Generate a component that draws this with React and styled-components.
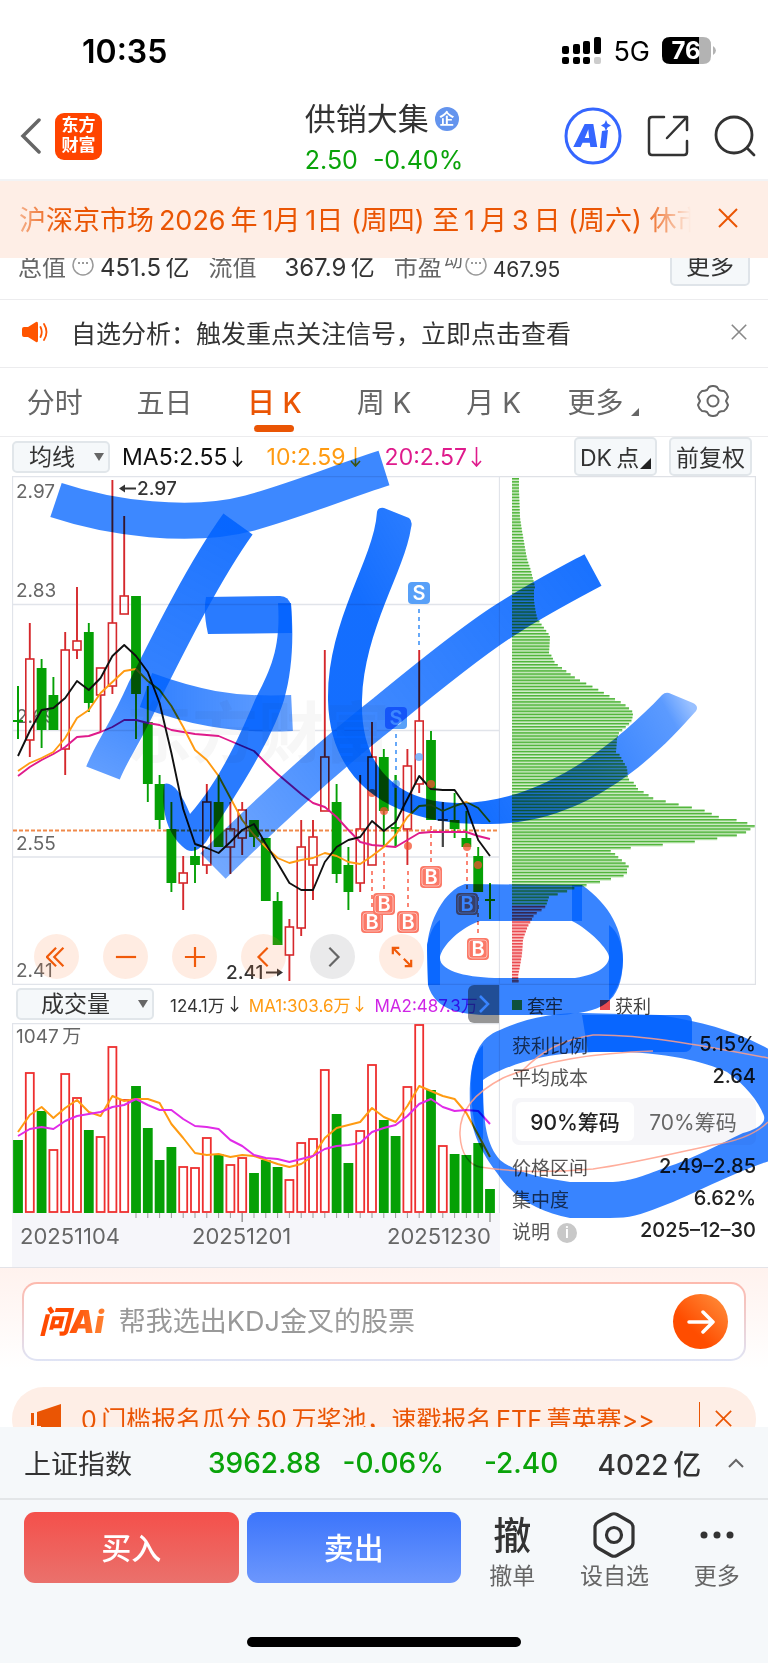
import React, { useState } from "react";
import styled, { createGlobalStyle } from "styled-components";

const GlobalStyle = createGlobalStyle`
  *, *::before, *::after { box-sizing: border-box; }
  body {
    margin: 0;
    background: #ffffff;
    color: #333333;
    font-family: Inter, "Noto Sans CJK SC", sans-serif;
  }
  button, input, select { font-family: inherit; color: inherit; }
  button { border: 0; padding: 0; background: none; cursor: pointer; }
  svg { display: block; }
`;

const Page = styled.main`
  display: flex;
  flex-direction: column;
  width: 100%;
  overflow: hidden;
`;

/* ---------- status bar and header ---------- */

const StatusBar = styled.div`
  display: flex;
  align-items: center;
  justify-content: space-between;
  height: 94px;
  padding: 8px 52px 0 82px;
  color: #000000;
`;

const Clock = styled.time`
  font-size: 32px;
  font-weight: 600;
`;

const StatusIcons = styled.div`
  display: flex;
  align-items: center;
  gap: 12px;
  font-size: 27px;
`;

const Header = styled.header`
  display: grid;
  grid-template-columns: 1fr auto 1fr;
  align-items: center;
  height: 87px;
  padding: 1px 12px 2px;
  border-bottom: 2px solid #f2f3f5;
`;

const HeaderSide = styled.div`
  display: flex;
  align-items: center;
  justify-content: ${(p) => (p.$end ? "flex-end" : "flex-start")};
  gap: ${(p) => (p.$end ? 25 : 13)}px;
  height: 68px;
  padding-left: 8px;
`;

const Brand = styled.div`
  display: grid;
  place-items: center;
  align-content: center;
  width: 47px;
  height: 47px;
  padding-bottom: 2px;
  border-radius: 9px;
  background: #ff4400;
  color: #ffffff;
  font-size: 17px;
  font-weight: 700;
  line-height: 20px;
`;

const StockTitle = styled.div`
  display: flex;
  flex-direction: column;
  gap: 4px;
  padding-top: 4px;
`;

const StockName = styled.h1`
  display: flex;
  align-items: center;
  gap: 6px;
  margin: 0;
  font-size: 31px;
  font-weight: 400;
  line-height: 40px;
`;

const CorpBadge = styled.span`
  display: grid;
  place-items: center;
  width: 24px;
  height: 24px;
  border-radius: 50%;
  background: #6494ee;
  color: #ffffff;
  font-size: 15px;
  font-weight: 700;
  line-height: 24px;
`;

const StockPrice = styled.div`
  display: flex;
  gap: 15px;
  color: #0aa30a;
  font-size: 25px;
  line-height: 34px;
`;

/* ---------- notices ---------- */

const Notice = styled.section`
  display: flex;
  align-items: center;
  justify-content: space-between;
  height: 77px;
  padding: 0 30px 3px 19px;
  background: #feeee6;
  color: #ea5504;
`;

const NoticeText = styled.p`
  flex: 0 1 672px;
  margin: 0;
  overflow: hidden;
  white-space: nowrap;
  font-size: 27px;
  mask-image: linear-gradient(90deg, rgba(0, 0, 0, 0.4), #000 40px, #000 calc(100% - 50px), transparent);
`;

const StatStrip = styled.section`
  display: flex;
  align-items: flex-end;
  height: 42px;
  padding: 0 18px 13px 18px;
  overflow: hidden;
  border-bottom: 1px solid #ececee;
`;

const Stat = styled.div`
  display: flex;
  align-items: center;
  gap: 6px;
  height: 36px;
  margin-right: 19px;
  font-size: 24px;
  line-height: 36px;
  white-space: nowrap;
`;

const StatLabel = styled.span`
  display: flex;
  align-items: center;
  gap: ${(p) => (p.$wide ? 0 : 6)}px;
  width: ${(p) => (p.$wide ? "70px" : "auto")};
  color: #666666;
`;

const HintIcon = styled.svg`
  margin-bottom: 6px;
`;

const Sup = styled.small`
  margin: 0 -4px 14px -4px;
  font-size: 19px;
`;

const StatValue = styled.span`
  font-size: ${(p) => (p.$small ? 21 : 24)}px;
  padding-top: ${(p) => (p.$small ? 4 : 0)}px;
`;

const MoreButton = styled.button`
  width: 80px;
  height: 40px;
  margin: 0 0 0 auto;
  border: 2px solid #dfe4e9;
  border-radius: 5px;
  background: #f5f8fa;
  font-size: 24px;
  line-height: 30px;
`;

const Signal = styled.section`
  display: flex;
  align-items: center;
  height: 68px;
  padding: 0 21px 3px 22px;
  border-bottom: 1px solid #ececee;
  font-size: 25px;
`;

const SignalText = styled.p`
  flex: 1;
  margin: 0 0 0 22px;
  white-space: nowrap;
`;

/* ---------- chart ---------- */

const Tabs = styled.div`
  display: grid;
  grid-template-columns: repeat(7, 1fr);
  height: 69px;
  border-bottom: 1px solid #ececee;
`;

const Tab = styled.button`
  position: relative;
  display: flex;
  align-items: center;
  justify-content: center;
  gap: 8px;
  padding-bottom: 3px;
  font-size: 28px;
  color: ${(p) => (p.$active ? "#ea5504" : "#666666")};
  font-weight: ${(p) => (p.$active ? 500 : 400)};

  &::after {
    content: "";
    display: ${(p) => (p.$active ? "block" : "none")};
    position: absolute;
    left: calc(50% - 20px);
    bottom: 4px;
    width: 40px;
    height: 7px;
    border-radius: 4px;
    background: #ea5504;
  }
`;

const Corner = styled.i`
  align-self: flex-end;
  width: 0;
  height: 0;
  margin-bottom: ${(p) => (p.$dark ? 3 : 17)}px;
  border-left: ${(p) => (p.$dark ? 11 : 8)}px solid transparent;
  border-bottom: ${(p) => (p.$dark ? 11 : 8)}px solid ${(p) => (p.$dark ? "#222222" : "#666666")};
`;

const ChartSection = styled.section`
  position: relative;
  padding: 0 12px;
  border-bottom: 1px solid #e3e3e8;
`;

const ChartBar = styled.div`
  display: flex;
  align-items: center;
  height: 39px;
`;

const Averages = styled.div`
  display: flex;
  flex: 1;
  gap: ${(p) => p.$gap}px;
  margin-left: ${(p) => p.$indent}px;
  font-size: ${(p) => p.$size}px;
  white-space: nowrap;
`;

const Average = styled.span`
  display: flex;
  align-items: center;
  gap: 4px;
  color: ${(p) => p.$color};
`;

const ChartOption = styled.button`
  display: flex;
  align-items: center;
  justify-content: center;
  gap: 1px;
  width: 83px;
  height: 39px;
  margin-left: 12px;
  padding-bottom: 2px;
  border: 2px solid #e1e6ea;
  border-radius: 5px;
  background: #f5f8fa;
  font-size: 23px;
  white-space: nowrap;
  &:last-child { margin-right: 4px; }
`;

const SelectBox = styled.label`
  position: relative;
  display: flex;
  align-items: center;
  width: ${(p) => p.$width}px;
  height: 32px;
  margin-left: ${(p) => p.$indent}px;
  border: 2px solid #e1e6ea;
  border-radius: 5px;
  background: #f5f8fa;

  &::after {
    content: "";
    position: absolute;
    right: 4px;
    border: 5px solid transparent;
    border-top: 8px solid #666666;
    border-bottom: 0;
    pointer-events: none;
  }
`;

const Select = styled.select`
  width: 100%;
  height: 100%;
  padding: 0 20px 0 ${(p) => p.$pad}px;
  border: 0;
  appearance: none;
  background: transparent;
  font-size: 23px;
  line-height: 28px;
  outline: none;
`;

const ChartGrid = styled.div`
  display: grid;
  grid-template-columns: 488fr 256fr;
`;

const Column = styled.div`
  min-width: 0;
`;

const Plot = styled.div`
  position: relative;
  & > svg { width: 100%; height: auto; }
`;

const PlotButtons = styled.div`
  position: absolute;
  left: 22px;
  bottom: 6px;
  display: flex;
  gap: 24px;
`;

const RoundButton = styled.button`
  display: grid;
  place-items: center;
  width: 45px;
  height: 45px;
  border-radius: 50%;
  background: ${(p) => (p.$muted ? "rgba(90,90,100,0.13)" : "rgba(255,120,50,0.14)")};
`;

const Expander = styled.button`
  position: absolute;
  right: 0;
  top: 0;
  display: grid;
  place-items: center;
  width: 31px;
  height: 38px;
  border-radius: 6px 0 0 6px;
  background: rgba(80, 80, 80, 0.6);
`;

const VolumeBar = styled(ChartBar)`
  position: relative;
  height: 38px;
  border-right: 1px solid #e3e5ea;
`;

const Legend = styled.div`
  display: flex;
  align-items: center;
  gap: 37px;
  height: 43px;
  padding: 0 0 4px 12px;
  font-size: 18px;
  color: #444444;
`;

const LegendItem = styled.span`
  display: flex;
  align-items: center;
  gap: 5px;
  &::before {
    content: "";
    width: 10px;
    height: 10px;
    background: ${(p) => p.$color};
  }
`;

const ChipTable = styled.table`
  width: calc(100% - 12px);
  margin-left: 12px;
  border-collapse: collapse;
  font-size: 19px;
`;

const ChipLabel = styled.th`
  height: 32px;
  padding: 0;
  color: #555555;
  font-weight: 400;
  text-align: left;
  white-space: nowrap;
`;

const ChipValue = styled.td`
  padding: 0;
  color: #222222;
  font-size: 20px;
  font-weight: 500;
  text-align: right;
`;

const InfoDot = styled.span`
  display: inline-grid;
  place-items: center;
  width: 20px;
  height: 20px;
  margin-left: 7px;
  border-radius: 50%;
  background: #c8c8c8;
  color: #ffffff;
  font-size: 15px;
  font-weight: 600;
  line-height: 20px;
  vertical-align: middle;
`;

const Segments = styled.div`
  display: grid;
  grid-template-columns: 1fr 1fr;
  height: 47px;
  margin: 6px 0 5px 12px;
  padding: 4px;
  border-radius: 7px;
  background: #f6f6f9;
`;

const Segment = styled.button`
  padding-bottom: 2px;
  border-radius: 6px;
  background: ${(p) => (p.$on ? "#ffffff" : "transparent")};
  color: ${(p) => (p.$on ? "#222222" : "#666666")};
  font-size: 21px;
  font-weight: ${(p) => (p.$on ? 500 : 400)};
  white-space: nowrap;
`;

const Ink = styled.svg`
  position: absolute;
  left: 0;
  top: 0;
  width: 100%;
  height: auto;
  pointer-events: none;
  mix-blend-mode: multiply;
`;

/* ---------- assistant, promo, index, trade ---------- */

const Assistant = styled.section`
  padding: 14px 22px 26px;
  background: linear-gradient(#fff2ee, #ffffff 85%);
`;

const AskBox = styled.form`
  display: flex;
  align-items: center;
  height: 79px;
  padding: 0 16px 0 15px;
  border: 2px solid transparent;
  border-radius: 15px;
  background: linear-gradient(#ffffff, #ffffff) padding-box,
    linear-gradient(#fdb9ad, #dfe4f5) border-box;
`;

const AskLogo = styled.span`
  padding-right: 5px;
  background: linear-gradient(100deg, #ff4a00 40%, #ff8d3c);
  background-clip: text;
  -webkit-background-clip: text;
  color: transparent;
  font-size: 31px;
  font-style: italic;
  font-weight: 900;
  line-height: 40px;
  white-space: nowrap;
`;

const AskInput = styled.input`
  flex: 1;
  min-width: 0;
  height: 60px;
  margin-left: 10px;
  padding: 0;
  border: 0;
  outline: none;
  background: transparent;
  font-size: 27px;
  &::placeholder { color: #999999; opacity: 1; }
`;

const AskButton = styled.button`
  display: grid;
  place-items: center;
  width: 55px;
  height: 55px;
  border-radius: 50%;
  background: linear-gradient(45deg, #ff4d00 35%, #ff9340);
`;

const PromoClip = styled.section`
  height: 40px;
  padding: 0 12px;
  overflow: hidden;
`;

const Promo = styled.div`
  display: flex;
  align-items: center;
  height: 64px;
  padding: 0 24px 2px 19px;
  border-radius: 32px;
  background: #feeee6;
  color: #ea5504;
  font-size: 25px;
`;

const PromoText = styled.p`
  flex: 1;
  margin: 0 0 0 19px;
  white-space: nowrap;
`;

const PromoClose = styled.button`
  display: flex;
  align-items: center;
  height: 32px;
  padding-left: 15px;
  border-left: 1px solid #ea5504;
`;

const IndexBar = styled.section`
  display: flex;
  align-items: center;
  height: 73px;
  padding: 0 24px 0 24px;
  background: #f5f8fa;
  border-bottom: 2px solid #e3e6e8;
  font-size: 28px;
  font-weight: 500;
  white-space: nowrap;
`;

const IndexName = styled.span`
  width: 184px;
  font-size: 27px;
  font-weight: 400;
`;

const IndexValue = styled.span`
  flex: ${(p) => p.$grow} 1 0;
  color: ${(p) => (p.$down ? "#0aa30a" : "#333333")};
`;

const TradeBar = styled.footer`
  display: grid;
  grid-template-columns: 437fr 307fr;
  padding: 12px 0 0 24px;
  background: #f5f8fa;
`;

const TradeButtons = styled.div`
  display: grid;
  grid-template-columns: 1fr 1fr;
  gap: 8px;
`;

const TradeButton = styled.button`
  height: 71px;
  padding-bottom: 4px;
  border-radius: 11px;
  background: ${(p) =>
    p.$buy ? "linear-gradient(#f4504b, #ea716c)" : "linear-gradient(#3c75fb, #6c97fd)"};
  color: #ffffff;
  font-size: 30px;
  font-weight: 500;
`;

const Tools = styled.nav`
  display: grid;
  grid-template-columns: repeat(3, 1fr);
`;

const Tool = styled.button`
  display: flex;
  flex-direction: column;
  align-items: center;
  color: #666666;
  font-size: 23px;
  line-height: 36px;
  white-space: nowrap;
`;

const ToolIcon = styled.span`
  display: grid;
  place-items: center;
  height: 46px;
  color: #333333;
  font-size: 38px;
  font-weight: 500;
  line-height: 46px;
`;

const HomeArea = styled.div`
  display: flex;
  justify-content: center;
  padding: 43px 0 17px;
  background: #f5f8fa;
  &::after {
    content: "";
    width: 274px;
    height: 10px;
    border-radius: 5px;
    background: #000000;
  }
`;

/* ---------- data ---------- */

const GREEN = "#05a005";
const RED = "#d5282c";
const FIRST_X = 18;
const STEP = 11.8;
const xAt = (i) => FIRST_X + STEP * i;

// [direction, high, body top, body bottom, low] on the plot's vertical scale
const CANDLES = [
  ["g", 686, 721, 722, 739], ["r", 623, 659, 740, 757], ["g", 659, 668, 730, 748],
  ["g", 677, 695, 730, 730], ["r", 632, 650, 749, 775], ["r", 587, 641, 650, 659],
  ["g", 623, 632, 703, 712], ["r", 668, 668, 695, 732], ["r", 480, 623, 686, 694],
  ["r", 516, 596, 614, 614], ["g", 596, 596, 694, 739], ["g", 686, 722, 784, 802],
  ["g", 775, 784, 820, 829], ["g", 802, 829, 883, 892], ["r", 856, 873, 883, 910],
  ["g", 847, 856, 865, 883], ["r", 784, 802, 865, 874], ["g", 775, 802, 847, 847],
  ["r", 802, 829, 847, 874], ["r", 802, 810, 838, 855], ["g", 820, 820, 837, 847],
  ["g", 838, 838, 901, 901], ["g", 892, 901, 945, 945], ["r", 919, 927, 955, 981],
  ["r", 820, 847, 928, 936], ["r", 820, 837, 865, 900], ["r", 650, 757, 811, 811],
  ["g", 784, 802, 874, 883], ["g", 847, 865, 892, 910], ["r", 775, 829, 883, 892],
  ["r", 722, 757, 865, 865], ["g", 749, 757, 811, 846], ["g", 775, 828, 829, 847],
  ["r", 749, 766, 829, 865], ["r", 650, 721, 784, 793], ["g", 731, 740, 820, 820],
  ["k", 802, 820, 821, 847], ["g", 793, 820, 829, 838], ["g", 811, 838, 847, 847],
  ["g", 847, 856, 892, 892], ["g", 883, 900, 901, 919],
];

const MA5 = [756, 731, 710, 708, 698, 681, 690, 678, 656, 645, 656, 672, 703, 753, 809, 844, 848, 853, 842, 830, 824, 844, 863, 883, 890, 890, 862, 847, 840, 837, 821, 831, 822, 799, 776, 789, 790, 790, 807, 840, 856];
const MA10 = [771, 763, 758, 752, 738, 718, 710, 693, 682, 671, 669, 681, 690, 706, 727, 750, 760, 776, 798, 820, 835, 847, 858, 863, 860, 858, 853, 856, 862, 864, 856, 847, 835, 817, 806, 805, 811, 806, 802, 808, 822];
const MA20 = [776, 767, 760, 754, 747, 737, 736, 732, 727, 720, 720, 723, 725, 730, 732, 734, 735, 736, 741, 746, 751, 763, 774, 784, 794, 803, 807, 817, 830, 842, 845, 846, 847, 840, 833, 832, 832, 832, 832, 836, 839];

const VOLUMES = [
  ["g", 1140], ["r", 1072], ["g", 1111], ["r", 1149], ["r", 1073], ["r", 1097], ["g", 1130], ["r", 1136],
  ["r", 1046], ["r", 1099], ["g", 1086], ["g", 1128], ["g", 1160], ["g", 1147], ["r", 1166], ["r", 1167],
  ["r", 1137], ["g", 1154], ["r", 1164], ["r", 1157], ["g", 1173], ["g", 1160], ["g", 1167], ["r", 1179],
  ["r", 1142], ["r", 1138], ["r", 1069], ["g", 1114], ["g", 1163], ["r", 1130], ["r", 1064], ["g", 1120],
  ["g", 1136], ["r", 1086], ["r", 1024], ["g", 1090], ["r", 1145], ["g", 1154], ["g", 1155], ["g", 1143],
  ["g", 1189],
];
const VMA1 = [1132, 1115, 1107, 1118, 1108, 1100, 1112, 1116, 1096, 1101, 1099, 1099, 1103, 1124, 1138, 1153, 1155, 1154, 1157, 1155, 1156, 1160, 1164, 1167, 1164, 1156, 1138, 1128, 1125, 1122, 1108, 1117, 1122, 1106, 1086, 1091, 1096, 1099, 1113, 1135, 1157];
const VMA2 = [1136, 1129, 1127, 1129, 1121, 1116, 1114, 1112, 1107, 1105, 1099, 1105, 1110, 1110, 1119, 1126, 1127, 1129, 1140, 1146, 1155, 1158, 1159, 1162, 1159, 1156, 1149, 1146, 1145, 1143, 1132, 1128, 1125, 1116, 1104, 1099, 1107, 1111, 1110, 1111, 1124];

// [vertical position, bar length] outline of the chip distribution
const CHIPS = [
  [477, 7], [490, 7], [517, 8], [530, 10], [547, 13], [558, 15], [570, 19], [586, 23], [589, 22], [600, 22],
  [607, 23], [617, 25], [623, 29], [635, 38], [652, 37], [654, 39], [662, 43], [670, 54], [678, 65], [687, 83],
  [697, 101], [703, 112], [710, 120], [713, 121], [719, 120], [723, 117], [732, 107], [738, 105], [751, 104],
  [753, 107], [760, 111], [767, 115], [778, 116], [782, 122], [788, 126], [793, 135], [797, 140], [800, 152],
  [806, 177], [809, 191], [816, 207], [818, 221], [822, 235], [825, 243], [827, 240], [831, 235], [834, 228],
  [837, 209], [840, 190], [843, 159], [846, 128], [849, 97], [852, 102], [856, 106], [862, 113], [865, 117],
  [868, 115], [874, 115], [877, 102], [880, 92], [883, 80], [886, 65], [890, 56], [893, 47], [896, 37],
  [902, 35], [905, 34], [908, 31], [911, 26], [914, 22], [920, 19], [925, 16], [938, 11], [953, 10], [965, 8],
  [975, 6], [984, 7],
];

const SELL_MARKS = [[419, 593, 609, 645, 757], [396, 718, 734, 770, 784]];
const BUY_MARKS = [
  [372, 922, 871, 907, 793], [384, 904, 853, 889, 811], [408, 922, 871, 907, 846],
  [431, 877, 826, 862, 784], [467, 904, 853, 889, 847], [478, 949, 897, 933, 865],
];

const toPoints = (ys) => ys.map((y, i) => `${xAt(i)},${y}`).join(" ");

function chipLength(y) {
  const next = CHIPS.findIndex((c) => c[0] >= y);
  if (next <= 0) return CHIPS[0][1];
  const [y0, w0] = CHIPS[next - 1];
  const [y1, w1] = CHIPS[next];
  return w0 + ((w1 - w0) * (y - y0)) / (y1 - y0);
}

/* ---------- drawings ---------- */

const Cross = ({ size, color, width = 2 }) => (
  <svg width={size} height={size} viewBox="0 0 20 20" stroke={color} strokeWidth={width} fill="none">
    <path d="M1 1 19 19M19 1 1 19" />
  </svg>
);

const DownArrow = ({ h = 20 }) => (
  <svg width="11" height={h} viewBox="0 0 11 20" fill="none" stroke="currentColor" strokeWidth="1.600">
    <path d="M5.500 0V19M1 14l4.500 5 4.500-5" />
  </svg>
);

const Hint = () => (
  <HintIcon width="22" height="22" viewBox="0 0 22 22" fill="none" stroke="#999" strokeWidth="1.500">
    <circle cx="11" cy="11" r="10" />
    <path d="M6 9h2M10 9h2M14 9h2" strokeWidth="2" />
  </HintIcon>
);

function Candles() {
  return CANDLES.map(([dir, high, top, bottom, low], i) => {
    const x = xAt(i);
    const color = dir === "g" ? GREEN : dir === "r" ? RED : "#444444";
    const flat = bottom - top < 2;
    return (
      <g key={i} stroke={color} strokeWidth="1.900" fill="none">
        <path d={`M${x} ${high}V${top}M${x} ${bottom}V${low}`} />
        {flat && <path d={`M${x - 5} ${top}h10M${x} ${high}V${low}`} />}
        {!flat && dir === "r" && <rect x={x - 4} y={top} width="8" height={bottom - top} strokeWidth="1.600" />}
        {!flat && dir === "g" && <rect x={x - 4.900} y={top} width="9.800" height={bottom - top} fill={color} stroke="none" />}
      </g>
    );
  });
}

function Mark({ x, y, from, to, dot, letter, color }) {
  return (
    <g>
      <path d={`M${x} ${from}V${to}`} stroke={color} strokeWidth="1.800" strokeDasharray="4 4" />
      <circle cx={x} cy={dot} r="4" fill={letter === "B" ? "#f4502f" : color} opacity="0.750" />
      <rect x={x - 11} y={y - 11} width="22" height="22" rx="4" fill={color} />
      {letter === "B" && (
        <rect x={x - 9} y={y - 9} width="18" height="18" rx="3" fill="none" stroke="#ffffff" strokeWidth="1" opacity="0.500" />
      )}
      <text x={x} y={y + 7} textAnchor="middle" fontSize="20" fontWeight="600" fill="#ffffff">{letter}</text>
    </g>
  );
}

function KLine() {
  return (
    <svg viewBox="12 476 488 509" role="img" aria-label="日K线图">
      <path d="M12.500 985V476.500H499.500V985M12 984.500H500M12 604.500H500M12 730.500H500M12 857H500" fill="none" stroke="#e1e4ea" strokeWidth="1.300" />
      <text x="126" y="757" fontSize="66" fontWeight="700" fill="#f7f7f7">东方财富</text>
      <g fontSize="19" fill="#666666">
        <text x="16" y="498">2.97</text>
        <text x="16" y="597">2.83</text>
        <text x="16" y="723">2.69</text>
        <text x="16" y="850">2.55</text>
        <text x="16" y="977">2.41</text>
      </g>
      <path d="M13 830.500H499" stroke="#f08a4b" strokeWidth="1.800" strokeDasharray="4 2" />
      <Candles />
      <g fill="none" strokeWidth="1.900" strokeLinejoin="round">
        <polyline points={toPoints(MA20)} stroke="#df1b8c" />
        <polyline points={toPoints(MA10)} stroke="#ff9b12" />
        <polyline points={toPoints(MA5)} stroke="#111111" />
      </g>
      {SELL_MARKS.map(([x, y, from, to, dot]) => (
        <Mark key={x} x={x} y={y} from={from} to={to} dot={dot} letter="S" color="#58a0f8" />
      ))}
      {BUY_MARKS.map(([x, y, from, to, dot]) => (
        <Mark key={x} x={x} y={y} from={from} to={to} dot={dot} letter="B" color="#fb7967" />
      ))}
      <g fontSize="19" fontWeight="500" fill="#333333">
        <text x="137" y="495">2.97</text>
        <text x="226" y="979">2.41</text>
      </g>
      <path d="M136 488.500H121M266 972.500H280" stroke="#333333" strokeWidth="2" />
      <path d="M119 488.500l6-4v8zM283 972.500l-6-4v8z" fill="#333333" />
    </svg>
  );
}

function Volume() {
  return (
    <svg viewBox="12 1023 488 244" role="img" aria-label="成交量图">
      <rect x="12" y="1213" width="488" height="54" fill="#f6f6fa" />
      <path d="M12.500 1213V1023.500H499.500V1213" fill="none" stroke="#e1e4ea" strokeWidth="1.300" />
      <text x="16" y="1043" fontSize="19" fill="#666666">1047{"\u2009"}万</text>
      {VOLUMES.map(([dir, top], i) =>
        dir === "g" ? (
          <rect key={i} x={xAt(i) - 4.900} y={top} width="9.800" height={1213 - top} fill={GREEN} />
        ) : (
          <rect key={i} x={xAt(i) - 4} y={top + 1} width="8" height={1211 - top} fill="none" stroke="#ee2f2f" strokeWidth="1.800" />
        )
      )}
      <g fill="none" strokeWidth="2" strokeLinejoin="round">
        <polyline points={toPoints(VMA1)} stroke="#ff9b12" />
        <polyline points={toPoints(VMA2)} stroke="#e02be8" />
      </g>
      {VOLUMES.map((v, i) =>
        i > 9 ? <path key={i} d={`M${xAt(i)} 1213v${i === 19 || i === 40 ? 9 : 5}`} stroke="#999999" strokeWidth={i === 19 || i === 40 ? 1.500 : 1} /> : null
      )}
      <g fontSize="22" fill="#666666">
        <text x="20" y="1244">20251104</text>
        <text x="192" y="1244">20251201</text>
        <text x="491" y="1244" textAnchor="end">20251230</text>
      </g>
    </svg>
  );
}

function ChipChart() {
  const bars = Array.from({ length: 163 }, (_, i) => 478 + i * 3.100);
  return (
    <svg viewBox="500 476 256 509" role="img" aria-label="筹码分布">
      <path d="M500 476.500H755.500V984.500H500" fill="none" stroke="#dfe1e6" strokeWidth="1.300" />
      {bars.map((y) => {
        const trapped = y < 904;
        const w = chipLength(y);
        return (
          <g key={y}>
            <rect x="512" y={y} width={w} height="2.600" fill={trapped ? "#b4e0a8" : "#f8a0a0"} />
            <rect x="512" y={y} width={w} height="1.400" fill={trapped ? "#52b53c" : "#ea4a50"} />
          </g>
        );
      })}
    </svg>
  );
}

function Handwriting() {
  return (
    <Ink viewBox="0 437 768 831" aria-hidden="true">
      <defs>
        <linearGradient id="fadeRight" gradientUnits="userSpaceOnUse" x1="480" y1="810" x2="685" y2="695">
          <stop offset="0" stopColor="#0062ff" stopOpacity="0.920" />
          <stop offset="0.500" stopColor="#0062ff" stopOpacity="0.800" />
          <stop offset="0.900" stopColor="#0062ff" stopOpacity="0.640" />
          <stop offset="1" stopColor="#0062ff" stopOpacity="0.400" />
        </linearGradient>
        <linearGradient id="fadeDown" gradientUnits="userSpaceOnUse" x1="235" y1="530" x2="105" y2="775">
          <stop offset="0" stopColor="#0062ff" stopOpacity="0.880" />
          <stop offset="0.600" stopColor="#0062ff" stopOpacity="0.800" />
          <stop offset="1" stopColor="#0062ff" stopOpacity="0.620" />
        </linearGradient>
        <linearGradient id="fadeUp" gradientUnits="userSpaceOnUse" x1="213" y1="866" x2="593" y2="570">
          <stop offset="0" stopColor="#0062ff" stopOpacity="0.550" />
          <stop offset="0.400" stopColor="#0062ff" stopOpacity="0.740" />
          <stop offset="1" stopColor="#0062ff" stopOpacity="0.900" />
        </linearGradient>
        <linearGradient id="fadeSide" gradientUnits="userSpaceOnUse" x1="140" y1="0" x2="294" y2="0">
          <stop offset="0" stopColor="#0062ff" stopOpacity="0.820" />
          <stop offset="1" stopColor="#0062ff" stopOpacity="0.600" />
        </linearGradient>
      </defs>
      <g fill="none" strokeWidth="36" strokeLinejoin="round">
        <path d="M56 500C110 518 190 529 250 513C300 499 340 482 384 468" stroke="#0062ff" opacity="0.760" />
        <path d="M238 524C205 570 170 640 145 690C125 735 112 750 103 773" stroke="url(#fadeDown)" />
        <path d="M146 690C190 706 230 716 292 713" stroke="url(#fadeSide)" />
        <path d="M213 866C280 800 330 755 385 712C430 675 480 635 510 617C540 598 565 585 593 570" stroke="url(#fadeUp)" />
      </g>
      <g fill="#0062ff">
        <path d="M206 597L280 596Q289 596 291 606L292 633L208 634Q203 612 206 597Z" opacity="0.840" />
        <path d="M278 603L291 603C294 640 292 672 284 700C270 745 232 800 206 842Q196 854 187 850C172 840 160 818 164 784Q176 780 190 814C220 780 240 735 255 700C270 670 281 650 278 603Z" opacity="0.840" />
        <path d="M377 512Q378 507 384 508L409 518Q413 521 411 528C405 570 364 630 362 700C360 770 400 803 460 803C540 803 615 745 662 695Q665 692 669 693L693 703Q699 706 696 711C660 752 590 824 490 824C400 826 330 790 328 700C327 620 374 560 377 512Z" fill="url(#fadeRight)" />
        <path fillRule="evenodd" opacity="0.780" d="M582 885L465 884C445 890 428 920 427 950L428 985C435 1010 460 1015 490 1015L560 1015C600 1012 622 1005 623 960C623 930 610 905 582 885ZM572 921L480 921C455 930 440 950 440 958C440 972 470 978 500 978L575 978C600 974 609 965 609 957C609 950 590 930 572 921Z" />
        <path d="M572 885h10v36h-10zM427 945Q432 925 440 920V985L428 985ZM609 925Q622 935 623 960Q622 985 609 1000Z" opacity="0.800" />
        <path fillRule="evenodd" opacity="0.780" d="M470 1107C468 1060 478 1038 500 1030C530 1016 560 1013 583 1013L660 1015C700 1022 740 1030 780 1056V1158C740 1168 700 1192 660 1207C640 1215 630 1218 610 1218H570C540 1212 515 1200 497 1173C482 1153 471 1133 470 1107ZM483 1080C500 1068 540 1054 577 1053C650 1048 700 1060 727 1072C745 1085 758 1100 764 1116C766 1124 755 1130 743 1133C720 1144 690 1160 667 1167C640 1177 630 1181 613 1182H570C540 1178 515 1172 500 1160C487 1145 483 1125 483 1080Z" />
        <path d="M582 1015H686Q692 1015 692 1022V1046Q690 1052 684 1052H588ZM471 1080Q472 1055 483 1045V1140Q471 1130 471 1080Z" opacity="0.850" />
      </g>
      <g fill="none" stroke="#ff9f8a" strokeWidth="1.500" opacity="0.850">
        <path d="M653 1051C590 1053 540 1062 503 1078C470 1095 459 1115 460 1135C461 1155 470 1165 480 1167C520 1173 560 1172 593 1169C630 1164 680 1152 713 1145C745 1140 760 1130 768 1122" />
        <path d="M523 1070C540 1053 560 1040 593 1035C640 1034 700 1045 768 1058" />
      </g>
    </Ink>
  );
}

const NAV_ICONS = [
  ["最早", "M11 2 1 12 11 22M19 2 9 12 19 22"],
  ["缩小", "M1 12H23"],
  ["放大", "M1 12H23M12 1V23"],
  ["向左", "M16 2 6 12 16 22"],
  ["向右", "M8 2 18 12 8 22"],
  ["全屏", "M2 9V2H9M2 2 10 10M22 15V22H15M22 22 14 14"],
];

const TABS = ["分时", "五日", "日 K", "周 K", "月 K", "更多"];

const CHIP_TOP = [["获利比例", "5.15%"], ["平均成本", "2.64"]];
const CHIP_BOTTOM = [["价格区间", "2.49–2.85"], ["集中度", "6.62%"], ["说明", "2025–12–30"]];

function ChipRows({ rows }) {
  return (
    <ChipTable>
      <tbody>
        {rows.map(([label, value]) => (
          <tr key={label}>
            <ChipLabel scope="row">
              {label}
              {label === "说明" && <InfoDot>i</InfoDot>}
            </ChipLabel>
            <ChipValue>{value}</ChipValue>
          </tr>
        ))}
      </tbody>
    </ChipTable>
  );
}

export default function App() {
  const [tab, setTab] = useState("日 K");
  const [share, setShare] = useState("90%筹码");

  return (
    <Page>
      <GlobalStyle />
      <StatusBar>
        <Clock>10:35</Clock>
        <StatusIcons>
          <svg width="39" height="28" viewBox="0 0 39 28">
            <rect x="0" y="9" width="7" height="8" rx="2" />
            <rect x="11" y="7" width="7" height="10" rx="2" />
            <rect x="21" y="4" width="7" height="13" rx="2" />
            <rect x="32" y="0" width="7" height="17" rx="2" />
            <rect x="0" y="20" width="7" height="7" rx="2" />
            <rect x="11" y="20" width="7" height="7" rx="2" />
            <rect x="21" y="20" width="7" height="7" rx="2" />
            <rect x="32" y="20" width="7" height="7" rx="2" fill="#cccccc" />
          </svg>
          5G
          <svg width="54" height="28" viewBox="0 0 54 28">
            <path d="M8 0H37V27H8Q0 27 0 19V8Q0 0 8 0Z" />
            <path d="M37 0H41Q49 0 49 8V19Q49 27 41 27H37Z" fill="#b3b3b3" />
            <path d="M51 9Q54 11 54 13.500T51 18Z" fill="#b3b3b3" />
            <text x="24" y="22" textAnchor="middle" fontSize="24" fontWeight="700" fill="#ffffff">76</text>
          </svg>
        </StatusIcons>
      </StatusBar>

      <Header>
        <HeaderSide>
          <button aria-label="返回">
            <svg width="22" height="36" viewBox="0 0 22 36" fill="none" stroke="#666" strokeWidth="3.500" strokeLinecap="round">
              <path d="M19 2 3 18 19 34" />
            </svg>
          </button>
          <Brand>
            <span>东方</span>
            <span>财富</span>
          </Brand>
        </HeaderSide>
        <StockTitle>
          <StockName>
            供销大集<CorpBadge>企</CorpBadge>
          </StockName>
          <StockPrice>
            <span>2.50</span>
            <span>-0.40%</span>
          </StockPrice>
        </StockTitle>
        <HeaderSide $end>
          <button aria-label="Ai">
            <svg width="58" height="58" viewBox="0 0 58 58">
              <circle cx="29" cy="29" r="27" fill="none" stroke="#3566ff" strokeWidth="3" />
              <text x="10" y="40" fontSize="32" fontWeight="900" fontStyle="italic" fill="#3566ff">A</text>
              <path d="M38 24l6-1-2 18h-6z" fill="#3566ff" />
              <path d="M42 13l1.500 3.500 3.500 2-3.500 2-1.500 3.500-1.500-3.500-3.500-2 3.500-2z" fill="#3566ff" />
            </svg>
          </button>
          <button aria-label="分享">
            <svg width="42" height="42" viewBox="0 0 42 42" fill="none" stroke="#333" strokeWidth="2.500" strokeLinecap="round" strokeLinejoin="round">
              <path d="M17 2H5Q2 2 2 5V37Q2 40 5 40H37Q40 40 40 37V26M27 2H40V15M39 3 20 23" />
            </svg>
          </button>
          <button aria-label="搜索">
            <svg width="42" height="42" viewBox="0 0 42 42" fill="none" stroke="#333" strokeWidth="2.800" strokeLinecap="round">
              <circle cx="20" cy="20" r="18" />
              <path d="M33 33 40 40" />
            </svg>
          </button>
        </HeaderSide>
      </Header>

      <Notice>
        <NoticeText>沪深京市场{"\u2009"}2026{"\u2009"}年{"\u2009"}1月{"\u2009"}1日 (周四) 至{"\u2009"}1{"\u2009"}月{"\u2009"}3{"\u2009"}日 (周六) 休市</NoticeText>
        <button aria-label="关闭公告"><Cross size={20} color="#ea5504" /></button>
      </Notice>

      <StatStrip>
        <Stat>
          <StatLabel>总值<Hint /></StatLabel>
          <StatValue>451.5{"\u2009"}亿</StatValue>
        </Stat>
        <Stat>
          <StatLabel $wide>流值</StatLabel>
          <StatValue>367.9{"\u2009"}亿</StatValue>
        </Stat>
        <Stat>
          <StatLabel>市盈<Sup>动</Sup><Hint /></StatLabel>
          <StatValue $small>467.95</StatValue>
        </Stat>
        <MoreButton>更多</MoreButton>
      </StatStrip>

      <Signal>
        <svg width="27" height="22" viewBox="0 0 27 22" fill="#ff5500">
          <path d="M2 6H6L14 1Q16 0 16 3V19Q16 22 14 21L6 16H2Q0 16 0 14V8Q0 6 2 6Z" />
          <path d="M18.500 6Q21 11 18.500 16M22 3Q27 11 22 19" fill="none" stroke="#ff5500" strokeWidth="1.800" strokeLinecap="round" />
        </svg>
        <SignalText>自选分析：触发重点关注信号，立即点击查看</SignalText>
        <button aria-label="关闭提示"><Cross size={16} color="#888888" /></button>
      </Signal>

      <Tabs role="tablist">
        {TABS.map((name) => (
          <Tab key={name} role="tab" aria-selected={tab === name} $active={tab === name} onClick={() => setTab(name)}>
            {name}
            {name === "更多" && <Corner />}
          </Tab>
        ))}
        <Tab aria-label="设置">
          <svg width="32" height="32" viewBox="0 0 32 32" fill="none" stroke="#666" strokeWidth="2" strokeLinejoin="round">
            <path d="M12 2Q16 0 20 2L22 5Q24 6 27 6Q30 8 31 12L29 16L31 20Q30 24 27 26Q24 26 22 27L20 30Q16 32 12 30L10 27Q8 26 5 26Q2 24 1 20L3 16L1 12Q2 8 5 6Q8 6 10 5Z" />
            <circle cx="16" cy="16" r="5.500" />
          </svg>
        </Tab>
      </Tabs>

      <ChartSection>
        <ChartBar>
          <SelectBox $width={98} $indent={0}>
            <Select $pad={15} aria-label="主图指标" defaultValue="均线">
              <option>均线</option>
            </Select>
          </SelectBox>
          <Averages $gap={24} $indent={12} $size={23}>
            <Average $color="#111111">MA5:2.55<DownArrow /></Average>
            <Average $color="#ff9b12">10:2.59<DownArrow /></Average>
            <Average $color="#df1b8c">20:2.57<DownArrow /></Average>
          </Averages>
          <ChartOption>DK{"\u2009"}点<Corner $dark /></ChartOption>
          <ChartOption>前复权</ChartOption>
        </ChartBar>

        <ChartGrid>
          <Column>
            <Plot>
              <KLine />
              <PlotButtons>
                {NAV_ICONS.map(([name, d]) => (
                  <RoundButton key={name} aria-label={name} $muted={name === "向右"}>
                    <svg width="22" height="22" viewBox="0 0 24 24" fill="none" stroke={name === "向右" ? "#666666" : "#f05a0a"} strokeWidth="2.400">
                      <path d={d} />
                    </svg>
                  </RoundButton>
                ))}
              </PlotButtons>
            </Plot>
            <VolumeBar>
              <SelectBox $width={138} $indent={4}>
                <Select $pad={23} aria-label="副图指标" defaultValue="成交量">
                  <option>成交量</option>
                </Select>
              </SelectBox>
              <Averages $gap={9} $indent={16} $size={17}>
                <Average $color="#333333">124.1万<DownArrow h={16} /></Average>
                <Average $color="#ff9b12">MA1:303.6万<DownArrow h={16} /></Average>
                <Average $color="#cf25e6">MA2:487.3万</Average>
              </Averages>
              <Expander aria-label="展开">
                <svg width="12" height="18" viewBox="0 0 12 18" fill="none" stroke="#ffffff" strokeWidth="2.500">
                  <path d="M2 1 10 9 2 17" />
                </svg>
              </Expander>
            </VolumeBar>
            <Plot>
              <Volume />
            </Plot>
          </Column>
          <Column>
            <Plot>
              <ChipChart />
            </Plot>
            <Legend>
              <LegendItem $color="#3c9c3c">套牢</LegendItem>
              <LegendItem $color="#ea4a50">获利</LegendItem>
            </Legend>
            <ChipRows rows={CHIP_TOP} />
            <Segments>
              {["90%筹码", "70%筹码"].map((s) => (
                <Segment key={s} $on={share === s} aria-pressed={share === s} onClick={() => setShare(s)}>{s}</Segment>
              ))}
            </Segments>
            <ChipRows rows={CHIP_BOTTOM} />
          </Column>
        </ChartGrid>
        <Handwriting />
      </ChartSection>

      <Assistant>
        <AskBox onSubmit={(e) => e.preventDefault()}>
          <AskLogo>问Ai</AskLogo>
          <AskInput aria-label="问Ai" placeholder="帮我选出KDJ金叉的股票" />
          <AskButton aria-label="发送">
            <svg width="28" height="26" viewBox="0 0 28 26" fill="none" stroke="#ffffff" strokeWidth="3.500" strokeLinecap="round" strokeLinejoin="round">
              <path d="M2 13H26M16 3 26 13 16 23" />
            </svg>
          </AskButton>
        </AskBox>
      </Assistant>

      <PromoClip>
        <Promo>
          <svg width="31" height="28" viewBox="0 0 31 28" fill="#ea5504">
            <path d="M0 9H3V21H0ZM6 8 30 0V28H26L20 24H17V28H10V22H6Z" />
          </svg>
          <PromoText>0{"\u2009"}门槛报名瓜分{"\u2009"}50{"\u2009"}万奖池，速戳报名{"\u2009"}ETF{"\u2009"}菁英赛&gt;&gt;</PromoText>
          <PromoClose aria-label="关闭活动"><Cross size={17} color="#ea5504" /></PromoClose>
        </Promo>
      </PromoClip>

      <IndexBar>
        <IndexName>上证指数</IndexName>
        <IndexValue $down $grow={135}>3962.88</IndexValue>
        <IndexValue $down $grow={142}>-0.06%</IndexValue>
        <IndexValue $down $grow={114}>-2.40</IndexValue>
        <IndexValue $grow={131}>4022{"\u2009"}亿</IndexValue>
        <svg width="16" height="10" viewBox="0 0 16 10" fill="none" stroke="#666" strokeWidth="2">
          <path d="M1 9 8 2 15 9" />
        </svg>
      </IndexBar>

      <TradeBar>
        <TradeButtons>
          <TradeButton $buy>买入</TradeButton>
          <TradeButton>卖出</TradeButton>
        </TradeButtons>
        <Tools>
          <Tool>
            <ToolIcon>撤</ToolIcon>
            撤单
          </Tool>
          <Tool>
            <ToolIcon>
              <svg width="42" height="46" viewBox="0 0 42 46" fill="none" stroke="#333" strokeWidth="3.200" strokeLinejoin="round">
                <path d="M18 2.500Q21 1 24 2.500L37 10Q40 12 40 15V31Q40 34 37 36L24 43.500Q21 45 18 43.500L5 36Q2 34 2 31V15Q2 12 5 10Z" />
                <circle cx="21" cy="23" r="7.500" />
              </svg>
            </ToolIcon>
            设自选
          </Tool>
          <Tool>
            <ToolIcon>
              <svg width="34" height="8" viewBox="0 0 34 8" fill="#333">
                <circle cx="4" cy="4" r="3.500" />
                <circle cx="17" cy="4" r="3.500" />
                <circle cx="30" cy="4" r="3.500" />
              </svg>
            </ToolIcon>
            更多
          </Tool>
        </Tools>
      </TradeBar>
      <HomeArea />
    </Page>
  );
}
